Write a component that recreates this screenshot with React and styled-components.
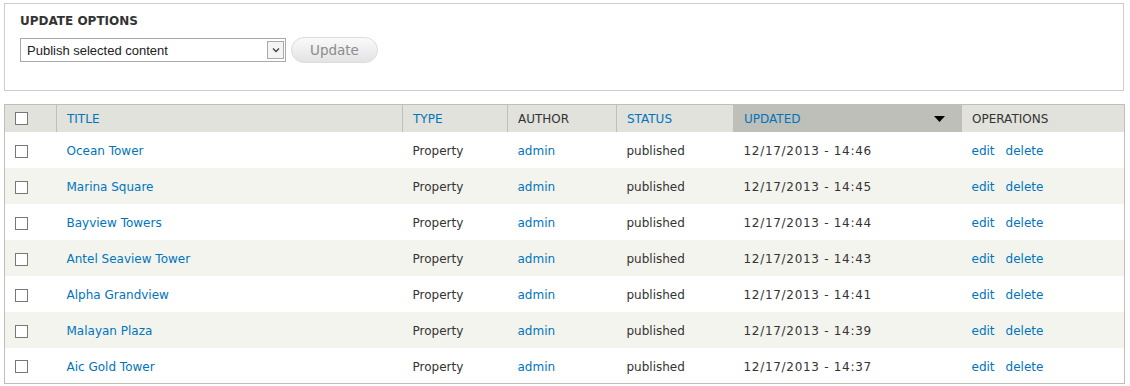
import React from 'react';
import styled, { createGlobalStyle } from 'styled-components';

const GlobalStyle = createGlobalStyle`
  body {
    margin: 0;
    background: #ffffff;
    font-family: "DejaVu Sans", Verdana, sans-serif;
    color: #333333;
  }
`;

const Page = styled.div`
  padding: 3px 6px 0 4px;
  display: flex;
  flex-direction: column;
  gap: 13px;
`;

const Fieldset = styled.div`
  border: 1px solid #cccccc;
  height: 88px;
  box-sizing: border-box;
  padding: 9px 15px 0 15px;
  display: flex;
  flex-direction: column;
  gap: 8px;
`;

const Legend = styled.div`
  font-size: 12px;
  font-weight: bold;
  text-transform: uppercase;
  color: #333333;
  line-height: 16px;
`;

const Controls = styled.div`
  display: flex;
  align-items: center;
  gap: 5px;
`;

const SelectBox = styled.div`
  width: 257px;
  height: 22px;
  border: 1px solid #a9a9a9;
  display: flex;
  align-items: center;
  justify-content: space-between;
  padding: 0 1px 0 6px;
  box-sizing: content-box;
  font-family: "Liberation Sans", Arial, sans-serif;
  font-size: 13px;
  color: #222222;
`;

const ArrowBox = styled.div`
  width: 15px;
  height: 16px;
  border: 1px solid #a9a9a9;
  background: #f4f4f4;
  display: flex;
  align-items: center;
  justify-content: center;
`;

const Button = styled.button`
  height: 26px;
  padding: 0 18px;
  border: 1px solid #dcdcdc;
  border-radius: 13px;
  background: linear-gradient(#fafafa, #e3e3e3);
  font-family: "DejaVu Sans", Verdana, sans-serif;
  font-size: 13.5px;
  color: #8c8c8c;
`;

const Table = styled.table`
  width: 1121px;
  border-collapse: collapse;
  border: 1px solid #bebfb9;
  font-size: 12px;
`;

const Th = styled.th`
  height: 27px;
  padding: 1px 10px 0;
  text-align: left;
  font-weight: normal;
  text-transform: uppercase;
  background: ${p => (p.$active ? '#bebfb9' : '#e1e2dc')};
  border-left: 1px solid #bebfb9;
  color: ${p => (p.$link ? '#0074bd' : '#333333')};
  width: ${p => p.$w}px;
  box-sizing: border-box;
`;

const SortHead = styled.div`
  display: flex;
  align-items: center;
  justify-content: space-between;
  padding-right: 6px;
`;

const Row = styled.tr`
  background: ${p => (p.$even ? '#f3f4ee' : '#ffffff')};
`;

const Td = styled.td`
  height: 36px;
  box-sizing: border-box;
  padding: 3px 10px 0;
  color: #333333;
  letter-spacing: ${p => (p.$spaced ? '0.7px' : '0')};
`;

const Link = styled.a`
  color: #0074bd;
  text-decoration: none;
  margin-right: ${p => (p.$gap ? '11px' : '0')};
`;

const Check = styled.span`
  display: block;
  width: 11px;
  height: 11px;
  border: 1px solid #777777;
  background: #ffffff;
`;

const rows = [
  ['Ocean Tower', '14:46'],
  ['Marina Square', '14:45'],
  ['Bayview Towers', '14:44'],
  ['Antel Seaview Tower', '14:43'],
  ['Alpha Grandview', '14:41'],
  ['Malayan Plaza', '14:39'],
  ['Aic Gold Tower', '14:37'],
];

export default function App() {
  return (
    <Page>
      <GlobalStyle />
      <Fieldset>
        <Legend>Update options</Legend>
        <Controls>
          <SelectBox>
            <span>Publish selected content</span>
            <ArrowBox>
              <svg width="8" height="6" viewBox="0 0 8 6">
                <path d="M1 1.5 L4 4.5 L7 1.5" fill="none" stroke="#444" strokeWidth="1.4" />
              </svg>
            </ArrowBox>
          </SelectBox>
          <Button>Update</Button>
        </Controls>
      </Fieldset>
      <Table>
        <thead>
          <tr>
            <Th $w={52}><Check /></Th>
            <Th $w={346} $link>Title</Th>
            <Th $w={105} $link>Type</Th>
            <Th $w={109}>Author</Th>
            <Th $w={117} $link>Status</Th>
            <Th $w={228} $link $active>
              <SortHead>
                <span>Updated</span>
                <svg width="11" height="6" viewBox="0 0 11 6">
                  <path d="M0 0 H11 L5.5 6 Z" fill="#000" />
                </svg>
              </SortHead>
            </Th>
            <Th>Operations</Th>
          </tr>
        </thead>
        <tbody>
          {rows.map(([title, time], i) => (
            <Row key={title} $even={i % 2 === 1}>
              <Td><Check /></Td>
              <Td><Link>{title}</Link></Td>
              <Td>Property</Td>
              <Td><Link>admin</Link></Td>
              <Td>published</Td>
              <Td $spaced>12/17/2013 - {time}</Td>
              <Td><Link $gap>edit</Link><Link>delete</Link></Td>
            </Row>
          ))}
        </tbody>
      </Table>
    </Page>
  );
}
